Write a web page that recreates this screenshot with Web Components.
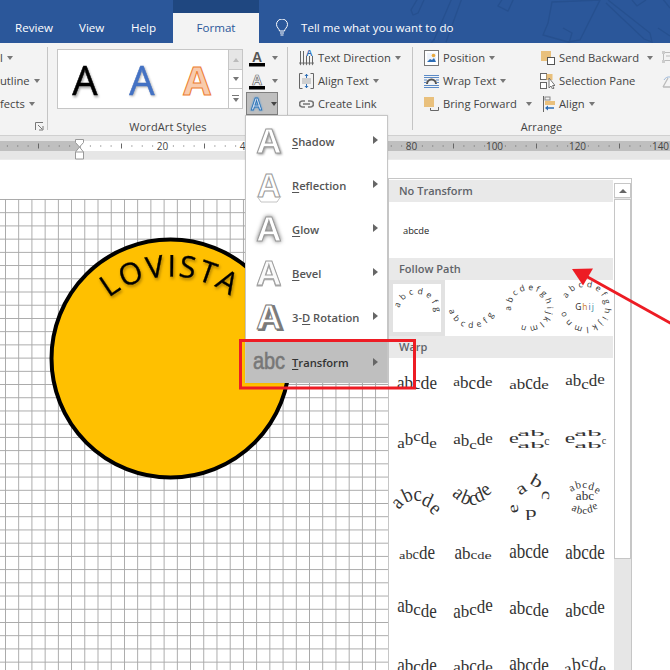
<!DOCTYPE html>
<html>
<head>
<meta charset="utf-8">
<title>Format</title>
<style>
  html, body { margin: 0; height: 100%; background: #fff; overflow: hidden; }
  body { font-family: "Open Sans", "Liberation Sans", sans-serif; }
  word-window { --ui: "Open Sans", "Liberation Sans", sans-serif; }
</style>
</head>
<body>
<word-window>
  <title-bar>
    <tab-label>Review</tab-label>
    <tab-label>View</tab-label>
    <tab-label>Help</tab-label>
    <tab-label active>Format</tab-label>
  </title-bar>

  <ribbon-bar>
    <ribbon-group width="48" pad="0">
      <rb-col width="47">
        <rb-cmd caret><span>l</span></rb-cmd>
        <rb-cmd caret><span>utline</span></rb-cmd>
        <rb-cmd caret><span>fects</span></rb-cmd>
      </rb-col>
    </ribbon-group>

    <ribbon-group width="240" pad="9" label="WordArt Styles" launcher>
      <wordart-gallery></wordart-gallery>
      <font-buttons></font-buttons>
    </ribbon-group>

    <ribbon-group width="125" pad="11">
      <rb-col width="113">
        <rb-cmd caret gap="4">
          <svg slot="icon" width="15" height="18" viewBox="0 0 15 18">
            <g stroke="#666" fill="none" stroke-width="1"><path d="M1.500 2v12M4.500 2v12M7.500 7v7M10.500 7v7M13.500 7v7"/></g>
            <g fill="#666"><path d="M0 13.500h3L1.500 16.500zM3 13.500h3L4.500 16.500zM6 13.500h3L7.500 16.500zM9 13.500h3L10.500 16.500zM12 13.500h3L13.500 16.500z"/></g>
            <text x="7" y="7" font-family="Liberation Sans" font-weight="700" font-size="9" fill="#2b6cb5">A</text>
          </svg>
          Text Direction
        </rb-cmd>
        <rb-cmd caret gap="4">
          <svg slot="icon" width="15" height="16" viewBox="0 0 15 16">
            <path d="M.5.5h3M11.500.5h3v15h-3M3.500 15.500h-3V.5" fill="none" stroke="#666"/>
            <path d="M3 6h9M3 8h9M3 10h9" stroke="#aaa"/>
            <path d="M7.500 1v4M7.500 11v4" stroke="#2b6cb5"/>
            <path d="M5.500 3L7.500 1l2 2M5.500 13l2 2 2-2z" fill="#2b6cb5"/>
          </svg>
          Align Text
        </rb-cmd>
        <rb-cmd gap="4">
          <svg slot="icon" width="15" height="8" viewBox="0 0 15 8">
            <path d="M6 1H3.500a3 3 0 0 0 0 6H6M9 1h2.500a3 3 0 0 1 0 6H9M4 4h7" fill="none" stroke="#777" stroke-width="1.700"/>
          </svg>
          Create Link
        </rb-cmd>
      </rb-col>
    </ribbon-group>

    <ribbon-group width="257" pad="11" label="Arrange" last>
      <rb-col width="116">
        <rb-cmd caret gap="4">
          <svg slot="icon" width="15" height="16" viewBox="0 0 15 16">
            <rect x=".5" y=".5" width="14" height="15" fill="#fff" stroke="#777"/>
            <rect x="3" y="3" width="9" height="9" fill="#eef3fa"/>
            <path d="M3 12l3-3 2 1 2-2 2 4z" fill="#2b6cb5"/>
            <circle cx="9.500" cy="5.500" r="1.800" fill="#e9a93c"/>
          </svg>
          Position
        </rb-cmd>
        <rb-cmd caret gap="4">
          <svg slot="icon" width="15" height="14" viewBox="0 0 15 14">
            <path d="M0 1.500h15M0 3.500h15M0 11.500h15M0 13.500h15M0 6h3M12 6h3M0 8.500h2M13 8.500h2" stroke="#5b8ac6"/>
            <path d="M3 10a4.500 4.500 0 0 1 9 0" fill="none" stroke="#555" stroke-width="2"/>
          </svg>
          Wrap Text
        </rb-cmd>
        <rb-cmd caret caret-at="9" gap="4">
          <svg slot="icon" width="15" height="14" viewBox="0 0 15 14">
            <rect x="0" y="0" width="10" height="10" fill="#e9c07c"/>
            <path d="M14.500 10v3.500H6.500V11" fill="none" stroke="#666"/>
          </svg>
          Bring Forward
        </rb-cmd>
      </rb-col>
      <rb-col width="122">
        <rb-cmd caret caret-at="8" gap="4">
          <svg slot="icon" width="15" height="14" viewBox="0 0 15 14">
            <rect x="1" y="0" width="10" height="10" fill="#e9c07c"/>
            <rect x="7.500" y="6.500" width="7" height="7" fill="#fff" stroke="#555"/>
          </svg>
          Send Backward
        </rb-cmd>
        <rb-cmd gap="4">
          <svg slot="icon" width="15" height="16" viewBox="0 0 15 16">
            <rect x=".5" y=".5" width="6" height="6" fill="#fff" stroke="#666"/>
            <rect x="6.500" y="1" width="6" height="6" fill="#e9c07c"/>
            <rect x=".5" y="9.500" width="6" height="6" fill="#fff" stroke="#666"/>
            <path d="M9 5v10l2-2 1.500 3 1.500-.8-1.500-2.700H15z" fill="#fff" stroke="#666" stroke-width=".9"/>
          </svg>
          Selection Pane
        </rb-cmd>
        <rb-cmd caret gap="4">
          <svg slot="icon" width="15" height="16" viewBox="0 0 15 16">
            <path d="M3.500 0v16" stroke="#666"/>
            <rect x="5" y="1" width="5" height="3" fill="none" stroke="#888"/>
            <rect x="5" y="5" width="10" height="4" fill="#e9c07c"/>
            <path d="M14 12H7" stroke="#2b6cb5" stroke-width="1.500"/>
            <path d="M8 9.500L5 12l3 2.500z" fill="#2b6cb5"/>
          </svg>
          Align
        </rb-cmd>
      </rb-col>
      <rb-col width="8">
        <rb-cmd>
          <svg slot="icon" width="8" height="14" viewBox="0 0 8 14"><path d="M1.500 1.500h6.500M1.500 1.500v8h6.500M4 5h4" fill="none" stroke="#bbb"/><rect x="0" y="0" width="3" height="3" fill="#ccc"/><rect x="0" y="9" width="3" height="3" fill="#ccc"/></svg>
        </rb-cmd>
        <rb-cmd>
          <svg slot="icon" width="8" height="14" viewBox="0 0 8 14"><path d="M1 13l5-9M1 13h7" fill="none" stroke="#bbb" stroke-width="1.300"/><path d="M2 6a6 6 0 0 1 6-3" fill="none" stroke="#9db8d9"/></svg>
        </rb-cmd>
      </rb-col>
    </ribbon-group>
  </ribbon-bar>

  <ruler-bar></ruler-bar>
  <doc-canvas></doc-canvas>

  <wordart-menu>
    <menu-entry kind="shadow" hot="S" rest="hadow"></menu-entry>
    <menu-entry kind="reflection" hot="R" rest="eflection"></menu-entry>
    <menu-entry kind="glow" hot="G" rest="low"></menu-entry>
    <menu-entry kind="bevel" hot="B" rest="evel"></menu-entry>
    <menu-entry kind="rotation" pre="3-" hot="D" rest=" Rotation"></menu-entry>
    <menu-entry kind="transform" hot="T" rest="ransform" active></menu-entry>
  </wordart-menu>

  <transform-gallery></transform-gallery>
  <callout-marks></callout-marks>
</word-window>

<script>
// small helper so every element does the same thing: open shadow, set html
class Base extends HTMLElement {
  constructor() {
    super();
    this.attachShadow({ mode: "open" });
  }
  connectedCallback() {
    this.shadowRoot.innerHTML = this.render();
  }
}

class WordWindow extends Base {
  render() {
    return `<style>
      :host { display: flex; flex-direction: column; position: relative; width: 670px; height: 670px; overflow: hidden; }
    </style><slot></slot>`;
  }
}

class TitleBar extends Base {
  render() {
    return `<style>
      :host { display: flex; position: relative; height: 43px; background: #2b579a; flex: none; overflow: hidden; }
      .tabs { display: flex; height: 100%; padding-left: 15px; }
      .tell { display: flex; align-items: center; gap: 13px; margin-left: 17px; padding-top: 12px; box-sizing: border-box; height: 100%; color: #fff; font: 11.6px var(--ui); position: relative; }
      .art { position: absolute; left: 400px; top: 0; }
    </style>
    <svg class="art" width="270" height="43" viewBox="0 0 270 43" fill="none" stroke="#26508f" stroke-width="1.300">
      <path d="M18 -2l-7 12 2 5 5-2 6-13M52 -2L34 40l-3 3M62 -2L46 42"/>
      <path d="M103 -2l-5 8 10 5 6-13"/>
      <path d="M152 2l48 -2-20 40-12 2-25-7 5-12z"/>
      <path d="M163 28l9 5-3 10"/>
      <path d="M208 0l42 33 2 9-8-3-38-36M232 0l5 6 9-6"/>
      <path d="M262 -2l8 10M258 28l12 8"/>
    </svg>
    <div class="tabs"><slot></slot></div>
    <div class="tell">
      <svg width="12" height="17" viewBox="0 0 12 17" fill="none" stroke="#fff" stroke-width="1"><path d="M3.500 12c0-2-3-3.500-3-6.500a5.500 5.500 0 0 1 11 0c0 3-3 4.500-3 6.500z"/><path d="M4 14h4M4.500 16h3"/></svg>
      <span>Tell me what you want to do</span>
    </div>`;
  }
}

class TabLabel extends Base {
  render() {
    const w = { Review: 64, View: 52, Help: 42 }[this.textContent.trim()] || 86;
    return `<style>
      :host { display: block; flex: none; width: ${w}px; height: 100%; font: 11.6px var(--ui); color: #fff; position: relative; }
      .tab { box-sizing: border-box; height: 100%; padding-top: 20px; line-height: 15px; }
      :host([active]) .tab { text-align: center; color: #2b579a; background: linear-gradient(#1f4780 0 13px, #f3f3f3 13px); }
    </style><div class="tab"><slot></slot></div>`;
  }
}

class RibbonBar extends Base {
  render() {
    return `<style>
      :host { display: flex; flex: none; height: 93px; background: #f3f3f3; box-sizing: border-box; border-bottom: 1px solid #d0d0d0; overflow: hidden; }
    </style><slot></slot>`;
  }
}

class RibbonGroup extends Base {
  render() {
    const label = this.getAttribute("label") || "";
    const launcher = this.hasAttribute("launcher");
    const last = this.hasAttribute("last");
    return `<style>
      :host { display: flex; flex-direction: column; flex: none; position: relative; box-sizing: border-box; width: ${this.getAttribute("width")}px; padding: 3px 0 0 ${this.getAttribute("pad")}px; }
      .body { display: flex; height: 73px; }
      .label { font: 11px var(--ui); color: #444; text-align: center; height: 16px; line-height: 16px; margin-left: -${this.getAttribute("pad")}px; letter-spacing: .1px; }
      .sep { position: absolute; right: 0; top: 4px; bottom: 5px; width: 1px; background: #c4c4c4; }
      svg { position: absolute; bottom: 4px; }
    </style>
    <div class="body"><slot></slot></div>
    <div class="label">${label}</div>
    ${last ? "" : '<div class="sep"></div>'}
    ${launcher ? '<svg style="left:-13px" width="9" height="9" viewBox="0 0 9 9" fill="none" stroke="#777"><path d="M.5 8V.5H8"/><path d="M3 3l4 4M4 8h4V4"/></svg>' : ""}`;
  }
}

class RbCol extends Base {
  render() {
    return `<style>
      :host { display: flex; flex-direction: column; flex: none; width: ${this.getAttribute("width")}px; }
    </style><slot></slot>`;
  }
}

class RbCmd extends Base {
  render() {
    const caret = this.hasAttribute("caret");
    const at = this.getAttribute("caret-at") || 4;
    const gap = this.getAttribute("gap") || 0;
    return `<style>
      :host { display: flex; align-items: center; height: 23px; font: 11.2px var(--ui); color: #444; white-space: nowrap; }
      .ic { display: flex; width: 15px; justify-content: center; margin-right: ${gap}px; }
      ::slotted([slot=icon]) { display: block; }
      i { width: 0; height: 0; border: 3px solid transparent; border-top: 4px solid #777; border-bottom: 0; margin-left: ${at}px; }
    </style>
    <span class="ic"><slot name="icon"></slot></span><slot></slot>${caret ? "<i></i>" : ""}`;
  }
  connectedCallback() {
    super.connectedCallback();
    if (!this.querySelector("[slot=icon]")) this.shadowRoot.querySelector(".ic").style.display = "none";
  }
}

class WordartGallery extends Base {
  render() {
    return `<style>
      :host { display: flex; flex: none; width: 186px; height: 60px; margin-top: 3px; }
      .box { width: 170px; height: 58px; background: #fff; border: 1px solid #c6c6c6; display: flex; }
      svg { display: block; }
      .scroll { display: flex; flex-direction: column; width: 15px; }
      .scroll b { flex: none; box-sizing: border-box; border: 1px solid #c6c6c6; border-left: 0; background: #fff; display: flex; align-items: center; justify-content: center; flex-direction: column; gap: 2px; }
      .scroll b + b { border-top: 0; }
      .up { height: 21px; background: #e6e6e6 !important; }
      .dn { height: 19px; }
      .mo { height: 20px; }
      i { display: block; width: 0; height: 0; border: 3.500px solid transparent; }
      .up i { border-bottom: 4px solid #bbb; border-top: 0; }
      .dn i, .mo i { border-top: 4px solid #777; border-bottom: 0; }
      .mo u { display: block; width: 7px; height: 1px; background: #777; }
    </style>
    <div class="box">
      <svg width="170" height="58" viewBox="0 0 170 58" font-family="Open Sans, Liberation Sans, sans-serif" font-size="40" text-anchor="middle">
        <text x="27" y="45" fill="#000" stroke="#000" stroke-width=".5" style="filter:drop-shadow(1px 2px 1px rgba(0,0,0,.35))">A</text>
        <text x="84" y="45" fill="#4472c4" stroke="#4472c4" stroke-width=".5" style="filter:drop-shadow(1px 1.500px 1px rgba(0,0,0,.3))">A</text>
        <text x="139" y="45" font-weight="700" fill="#f8cbad" stroke="#ed7d31" stroke-width="1">A</text>
      </svg>
    </div>
    <div class="scroll">
      <b class="up"><i></i></b>
      <b class="dn"><i></i></b>
      <b class="mo"><u></u><i></i></b>
    </div>`;
  }
}

class FontButtons extends Base {
  render() {
    const bar = (y, c) => `<rect x="0" y="${y}" width="16" height="3.500" fill="${c}"/>`;
    return `<style>
      :host { display: flex; flex-direction: column; flex: none; width: 32px; margin-left: 3px; }
      .b { display: flex; align-items: center; height: 23px; box-sizing: border-box; padding-left: 3px; }
      .on { background: #bfbfbf; border: 1px solid #7f7f7f; height: 23px; padding-left: 2px; }
      i { width: 0; height: 0; border: 3px solid transparent; border-top: 4px solid #777; border-bottom: 0; margin-left: 7px; }
      .on i { border-top-color: #444; }
      svg { display: block; }
    </style>
    <div class="b"><svg width="16" height="18" viewBox="0 0 16 18" font-family="Liberation Sans" font-weight="700" font-size="14" text-anchor="middle">
      <text x="8" y="13" fill="#555">A</text>${bar(14, "#000")}</svg><i></i></div>
    <div class="b"><svg width="16" height="18" viewBox="0 0 16 18" font-family="Liberation Sans" font-weight="700" font-size="14" text-anchor="middle">
      <text x="8" y="12.500" fill="#fff" stroke="#666" stroke-width=".7">A</text>${bar(14, "#000")}</svg><i></i></div>
    <div class="b on"><svg width="16" height="18" viewBox="0 0 16 18" font-family="Liberation Sans" font-weight="700" font-size="17" text-anchor="middle">
      <text x="8" y="15" fill="#cfdcf0" stroke="#2e75b6" stroke-width=".9" style="filter:drop-shadow(0 0 1px #5b9bd5)">A</text></svg><i></i></div>`;
  }
}

class RulerBar extends Base {
  render() {
    // 0 sits at x=79, one unit is 4.15px
    let marks = "";
    const origin = 79.500, unit = 4.15;
    for (let u = -20; u <= 145; u += 2.5) {
      const x = origin + u * unit;
      if (u % 20 === 0 && u > 0) {
        marks += `<text x="${x}" y="11.500" text-anchor="middle" font-size="10" fill="#444" font-family="Open Sans, Liberation Sans, sans-serif">${u}</text>`;
      } else if (u % 10 === 0) {
        marks += `<rect x="${x}" y="5.500" width="1" height="5" fill="#666"/>`;
      } else {
        marks += `<rect x="${x}" y="7.500" width="1" height="1" fill="#666"/>`;
      }
    }
    return `<style>
      :host { display: block; flex: none; height: 24px; background: #e6e6e6; border-bottom: 1px solid #ececec; box-sizing: border-box; padding-top: 5px; position: relative; }
      .strip { display: flex; height: 10px; background: #fff; }
      .l { width: 79px; background: #bfbfbf; }
      .m { flex: 1; }
      .r { width: 285px; background: #bfbfbf; }
      svg { position: absolute; left: 0; top: 2px; }
    </style>
    <div class="strip"><div class="l"></div><div class="m"></div><div class="r"></div></div>
    <svg width="670" height="16">${marks}</svg>
    <svg style="top:3px;left:74px" width="11" height="21" viewBox="0 0 11 21">
      <path d="M1.500.5h8v3L5.500 8l4 5v7h-8v-7l4-5-4-4.500z" fill="#fff" stroke="#999"/>
      <path d="M1.500 13h8" stroke="#999"/>
    </svg>`;
  }
}

class DocCanvas extends Base {
  render() {
    return `<style>
      :host { display: block; flex: 1; position: relative; background: #fff; }
      .grid { position: absolute; left: 0; top: 39px; width: 620px; bottom: 0;
        background-image: linear-gradient(#a8a8a8 1px, transparent 1px), linear-gradient(90deg, #a8a8a8 1px, transparent 1px);
        background-size: 13.220px 13.220px; background-position: 5px 0; }
      svg { position: absolute; left: 0; top: 0; }
    </style>
    <div class="grid"></div>
    <svg width="400" height="400" viewBox="0 160 400 400">
      <circle cx="170.500" cy="358.500" r="119" fill="#ffc000" stroke="#000" stroke-width="4"/>
      <defs><path id="arc" d="M109 298A100 100 0 0 1 233 298"/></defs>
      <text font-family="Open Sans, Liberation Sans, sans-serif" font-size="30" fill="#000" stroke="#000" stroke-width=".3" style="filter:drop-shadow(1px 2px 1.500px rgba(90,60,0,.55))"><textPath href="#arc" textLength="130" lengthAdjust="spacing">LOVISTA</textPath></text>
    </svg>`;
  }
}

class WordartMenu extends Base {
  render() {
    return `<style>
      :host { display: block; position: absolute; left: 245px; top: 115px; width: 143px; height: 268px; box-sizing: border-box; background: #fff; border: 1px solid #c6c6c6; box-shadow: 0 0 2px rgba(0,0,0,.1); padding-top: 3px; }
    </style><slot></slot>`;
  }
}

class MenuEntry extends Base {
  render() {
    const kind = this.getAttribute("kind");
    const a = (extra, fill = "#fff", stroke = "#999") =>
      `<text x="23" y="34" fill="${fill}" stroke="${stroke}" stroke-width="1" ${extra}>A</text>`;
    const icons = {
      shadow: a('style="filter:drop-shadow(1px 1px 1px rgba(0,0,0,.4))"'),
      reflection: a('font-size="33" y="32"') + '<path d="M11 33l4 6h16l4-6" fill="none" stroke="#c4c4c4"/>',
      glow: a('style="filter:drop-shadow(0 0 2px rgba(0,0,0,.55))"'),
      bevel: a('style="filter:drop-shadow(0 1px 0 #aaa)"', "#fafafa", "#a0a0a0"),
      rotation: `<text x="25" y="35" fill="#7a7a7a" stroke="#7a7a7a" stroke-width="2">A</text>` + a("", "#fff", "#777"),
      transform: `<text transform="translate(23 28) scale(1 1.200)" fill="#777" stroke="#777" stroke-width=".5" font-size="20" font-weight="400">abc</text>`
    };
    return `<style>
      :host { display: flex; align-items: center; height: 44px; position: relative; font: 600 11.2px var(--ui); color: #555; }
      :host([active]) { height: 41px; background: #bfbfbf; margin-top: 3px; color: #333; }
      svg { display: block; flex: none; }
      .t { white-space: pre; }
      u { text-underline-offset: 2px; }
      i { position: absolute; right: 9px; top: 50%; margin-top: -5px; width: 0; height: 0; border: 4px solid transparent; border-left: 5px solid #666; border-right: 0; }
    </style>
    <svg width="46" height="44" viewBox="0 0 46 44" font-family="Liberation Sans, sans-serif" font-size="35" font-weight="700" text-anchor="middle">${icons[kind]}</svg>
    <span class="t">${this.getAttribute("pre") || ""}<u>${this.getAttribute("hot")}</u>${this.getAttribute("rest")}</span>
    <i></i>`;
  }
}

const ADV = [0.444, 0.5, 0.444, 0.5, 0.444];
const WORD = "abcde";

// one warp preview: sy = height of each letter, dy = shift, rot = turn, sx = width, step = tighter or wider layout
function warpWord(o, base = 31, cx = 28, size = 17) {
  const sx = o.sx || [1, 1, 1, 1, 1];
  const sy = o.sy || [1, 1, 1, 1, 1];
  const dy = o.dy || [0, 0, 0, 0, 0];
  const rot = o.rot || [0, 0, 0, 0, 0];
  const step = o.step || 1;
  const total = ADV.reduce((s, a, i) => s + a * sx[i] * size * step, 0);
  let x = cx - total / 2, out = "";
  for (let i = 0; i < 5; i++) {
    out += `<text transform="translate(${x.toFixed(1)} ${base + dy[i]}) rotate(${rot[i]}) scale(${sx[i]} ${sy[i]})">${WORD[i]}</text>`;
    x += ADV[i] * sx[i] * size * step;
  }
  return out;
}

const squash = (s, x, y, sx, sy, rot = 0) =>
  `<text transform="translate(${x} ${y}) rotate(${rot}) scale(${sx} ${sy})" text-anchor="middle">${s}</text>`;

const big = [1.2, 1.2, 1.2, 1.2, 1.2];
const mid = [1.1, 1.1, 1.1, 1.1, 1.1];

const WARPS = [
  warpWord({ sy: [1.15, 1.15, 1.15, 1.15, 1.15], sx: [1, 1, 1, 1.05, 1] }),
  warpWord({ sy: [.7, .95, 1.1, .95, .7], dy: [-3, -1, 0, -1, -3], sx: [.9, 1, 1, 1.05, 1] }),
  warpWord({ sy: [.75, .9, 1.25, .95, .75] }),
  warpWord({ sy: [.8, 1, .9, 1, .9], dy: [-4, -3, 0, -3, -5] }),

  warpWord({ sy: [.8, 1, .9, .95, .8], dy: [2, -1, -5, -2, 2] }),
  warpWord({ sy: [.9, 1, .75, 1, .9], dy: [-2, 0, 3, -1, -3] }),
  squash("ab", 30, 21, 1.7, .5) + squash("ab", 30, 33, 1.7, .5) + squash("e", 13, 28, 1.3, .9) + squash("c", 46, 30, .7, .7),
  squash("ab", 31, 21, 1.7, .5) + squash("ab", 31, 33, 1.7, .5) + squash("e", 13, 28, 1.4, .9) + squash("c", 47, 29, .6, .6),

  warpWord({ sx: mid, sy: big, step: .84, rot: [-48, -25, 0, 25, 45], dy: [8, 1, -1, 2, 8] }),
  warpWord({ sx: mid, sy: big, step: .98, rot: [40, 22, 0, -22, -40], dy: [-7, 0, 3, 1, -5] }),
  squash("a", 23, 22, 1.3, 1, -35) + squash("b", 33, 15, 1.4, 1, 30) + squash("c", 41, 24, 1.2, .9, 95) + squash("d", 30, 39, 1.3, .9, 180) + squash("e", 17, 37, 1.2, .9, -100),
  `<g font-size="11">` + warpWord({ rot: [-28, -14, 0, 14, 28], dy: [4, 1, 0, 1, 4], step: 1.1 }, 17, 28, 11) + `</g>` +
    `<g font-size="12">` + squash("abc", 28, 29, 1.1, 1) + `</g>` +
    `<g font-size="11">` + warpWord({ rot: [24, 12, 0, -12, -24], dy: [-3, 0, 1, 0, -3], step: 1.1 }, 42, 28, 11) + `</g>`,

  warpWord({ sy: [.6, .7, .8, 1.1, 1.2], sx: [.85, .85, .85, 1, 1] }),
  warpWord({ sy: [1.2, .95, .7, .6, .6], sx: [1, 1, .9, .85, .95] }),
  warpWord({ sy: [1.25, 1.25, 1.25, 1.25, 1.25], dy: [-1, -1, -1, -1, -1] }),
  warpWord({ sy: big }),

  warpWord({ sy: [1.2, 1.1, 1, 1.1, 1.2], dy: [-3, -2, 0, 2, 3] }),
  warpWord({ sy: [1.2, 1, 1, 1.1, 1.1], dy: [3, 2, 0, -2, -4] }),
  warpWord({ sy: mid, dy: [-1, -1, 0, 1, 2] }),
  warpWord({ sy: mid, dy: [2, 1, 0, -1, -2] }),

  warpWord({ sy: [1.2, 1.1, 1, 1.1, 1.2] }),
  warpWord({ sy: [.9, 1, 1.1, 1, .9] }),
  warpWord({ sy: [1.2, 1.15, 1.1, 1.15, 1.2], dy: [-2, -1, -1, -1, 0] }),
  warpWord({ sy: [1, 1.1, .9, 1.1, 1], dy: [3, -1, -5, -3, 1], rot: [-12, -6, 0, 8, 14] })
];

function arcPath(cx, cy, r, from, to, sweep = 1) {
  const p = a => [cx + r * Math.cos(a * Math.PI / 180), cy + r * Math.sin(a * Math.PI / 180)];
  const [x1, y1] = p(from), [x2, y2] = p(to);
  const span = sweep ? (to - from + 360) % 360 : (from - to + 360) % 360;
  return `M${x1.toFixed(1)} ${y1.toFixed(1)}A${r} ${r} 0 ${span > 180 ? 1 : 0} ${sweep} ${x2.toFixed(1)} ${y2.toFixed(1)}`;
}

class GalleryHead extends Base {
  render() {
    return `<style>
      :host { display: block; height: 22px; background: #e9e9e9; padding-left: 10px; font: 600 11px/21px var(--ui); color: #5f6368; }
    </style><slot></slot>`;
  }
}

class TransformGallery extends Base {
  render() {
    const ff = 'font-family="Open Sans, Liberation Sans, sans-serif" font-size="8.500" fill="#333"';
    const cell = (inner) => `<svg width="56" height="56" viewBox="0 0 56 56">${inner}</svg>`;
    const tp = (id, d, text, len) =>
      `<defs><path id="${id}" d="${d}"/></defs><text ${ff}><textPath href="#${id}" textLength="${len}" lengthAdjust="spacing">${text}</textPath></text>`;
    const follow = [
      `<div class="sel">${cell(tp("p1", arcPath(28, 31, 18, 190, 10), "abcdefg", 52))}</div>`,
      cell(tp("p2", arcPath(27, 24, 24, 165, 15, 0), "abcdefg", 58)),
      cell(tp("p3", arcPath(28, 28, 18, 172, 130), "abcdefghijklmn", 94)),
      cell(tp("p4", arcPath(28, 27, 20, 205, 165), "abcdefghijklmno", 112) +
        `<text x="28" y="30" text-anchor="middle" font-family="Open Sans, Liberation Sans, sans-serif" font-size="8.500" letter-spacing="1"><tspan fill="#222">G</tspan><tspan fill="#c9791d">h</tspan><tspan fill="#2b6cb5">i</tspan><tspan fill="#2b8c9e">j</tspan></text>`)
    ].join("");
    const warp = WARPS.map(w =>
      `<svg width="56" height="56.500" viewBox="0 0 56 56.500" font-family="Liberation Serif, serif" font-size="17" fill="#333">${w}</svg>`
    ).join("");
    return `<style>
      :host { display: flex; position: absolute; left: 388px; top: 178px; width: 244px; height: 492px; box-sizing: border-box; background: #fff; border: 1px solid #c6c6c6; border-bottom: 0; padding: 1px 1px 0 0; overflow: hidden; }
      .list { flex: none; width: 224px; }
      .plain { height: 56px; display: flex; align-items: center; padding-left: 14px; font: 9.300px "Open Sans", "Liberation Sans", sans-serif; color: #222; }
      .four { display: grid; grid-template-columns: repeat(4, 56px); }
      svg { display: block; overflow: visible; }
      .sel { width: 56px; height: 56px; box-sizing: border-box; border: 4px solid #e2e2e2; overflow: hidden; }
      .sel svg { margin: -4px; }
      .bar { flex: none; width: 17px; margin-left: 1px; background: #e6e6e6; display: flex; flex-direction: column; margin-top: 3px; }
      .btn { height: 15px; box-sizing: border-box; border: 1px solid #c6c6c6; background: #fff; display: flex; align-items: center; justify-content: center; }
      .btn i { width: 0; height: 0; border: 4px solid transparent; border-bottom: 4px solid #666; border-top: 0; }
      .thumb { height: 360px; box-sizing: border-box; margin-top: 1px; border: 1px solid #c6c6c6; background: #fff; }
    </style>
    <div class="list">
      <gallery-head>No Transform</gallery-head>
      <div class="plain">abcde</div>
      <gallery-head>Follow Path</gallery-head>
      <div class="four">${follow}</div>
      <gallery-head>Warp</gallery-head>
      <div class="four">${warp}</div>
    </div>
    <div class="bar">
      <div class="btn"><i></i></div>
      <div class="thumb"></div>
    </div>`;
  }
}

class CalloutMarks extends Base {
  render() {
    return `<style>
      :host { display: block; position: absolute; inset: 0; pointer-events: none; }
      svg { display: block; }
    </style>
    <svg width="670" height="670" viewBox="0 0 670 670">
      <rect x="240.500" y="340.500" width="174" height="47.500" fill="none" stroke="#ed1c24" stroke-width="3"/>
      <path d="M672 324L584 275" stroke="#ed1c24" stroke-width="3" fill="none"/>
      <path d="M572 269l21-.5-10 17z" fill="#ed1c24"/>
    </svg>`;
  }
}

const defs = {
  "word-window": WordWindow, "title-bar": TitleBar, "tab-label": TabLabel,
  "ribbon-bar": RibbonBar, "ribbon-group": RibbonGroup, "rb-col": RbCol, "rb-cmd": RbCmd,
  "wordart-gallery": WordartGallery, "font-buttons": FontButtons, "ruler-bar": RulerBar,
  "doc-canvas": DocCanvas, "wordart-menu": WordartMenu, "menu-entry": MenuEntry,
  "gallery-head": GalleryHead, "transform-gallery": TransformGallery, "callout-marks": CalloutMarks
};
for (const name in defs) customElements.define(name, defs[name]);
</script>
</body>
</html>
